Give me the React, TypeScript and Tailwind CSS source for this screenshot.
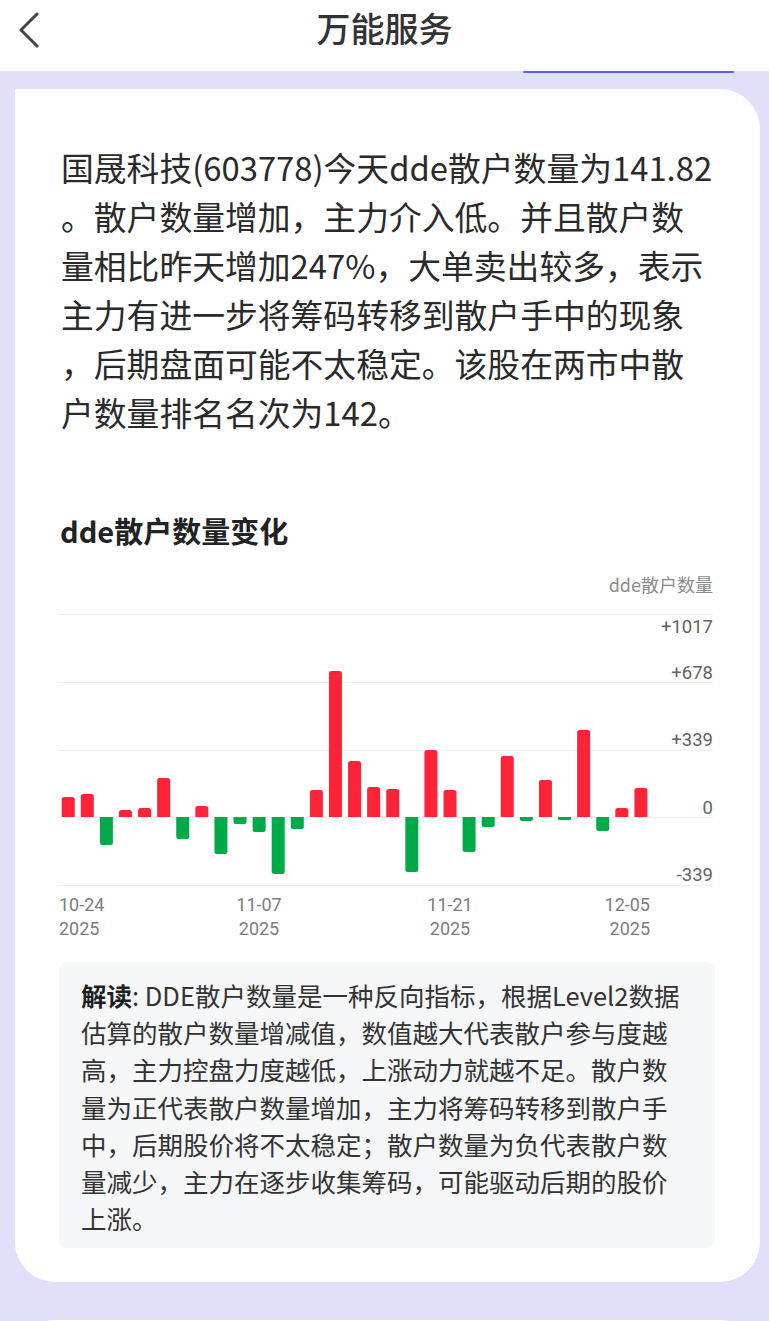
import React from "react";

const CJK = { fontFamily: '"Noto Sans CJK SC", "Noto Sans", sans-serif' };

// bar heights in px (positive = up from the zero line)
const BARS = [
  20, 23, -28, 7, 9, 39, -22, 11, -37, -7, -15, -57, -12, 27, 146, 56, 30, 28,
  -55, 67, 27, -35, -10, 61, -4, 37, -3, 87, -14, 9, 29,
];

const ZERO = 217;
const BAR_W = 13;

function barPath(x: number, h: number) {
  const r = Math.min(2.5, Math.abs(h) / 2);
  const w = BAR_W;
  if (h >= 0) {
    const y0 = ZERO - h;
    return `M${x},${ZERO} V${y0 + r} Q${x},${y0} ${x + r},${y0} H${x + w - r} Q${x + w},${y0} ${x + w},${y0 + r} V${ZERO} Z`;
  }
  const y1 = ZERO - h;
  return `M${x},${ZERO} V${y1 - r} Q${x},${y1} ${x + r},${y1} H${x + w - r} Q${x + w},${y1} ${x + w},${y1 - r} V${ZERO} Z`;
}

function BackIcon() {
  return (
    <svg width={24} height={36} viewBox="0 0 24 36" fill="none">
      <polyline
        points="19,2 3,18 19,34"
        stroke="#444"
        strokeWidth={3}
        strokeLinecap="round"
        strokeLinejoin="round"
      />
    </svg>
  );
}

function DdeChart() {
  const grid = [14, 82, 150, 217, 285];
  const yLabels: [string, number][] = [
    ["+1017", 27],
    ["+678", 73],
    ["+339", 140],
    ["0", 208],
    ["-339", 275],
  ];
  const xLabels: [string, number, "start" | "middle" | "end"][] = [
    ["10-24", 0, "start"],
    ["11-07", 200, "middle"],
    ["11-21", 391, "middle"],
    ["12-05", 591, "end"],
  ];
  return (
    <svg
      width={654}
      height={345}
      viewBox="0 0 654 345"
      className="block"
      style={{ fontFamily: 'Roboto, "Noto Sans", sans-serif' }}
    >
      {grid.map((y) => (
        <line key={y} x1={0} x2={654} y1={y + 0.5} y2={y + 0.5} stroke="#f0f0f2" strokeWidth={1} />
      ))}
      {BARS.map((h, i) => (
        <path key={i} d={barPath(2.7 + i * 19.09, h)} fill={h >= 0 ? "#fe2438" : "#00aa48"} />
      ))}
      {yLabels.map(([t, y]) => (
        <text key={t} x={654} y={y} textAnchor="end" dominantBaseline="central" fontSize={18.5} fill="#636363">
          {t}
        </text>
      ))}
      {xLabels.map(([t, x, a]) => (
        <g key={t} fill="#7c7c7c" fontSize={18}>
          <text x={x} y={304} textAnchor={a} dominantBaseline="central">
            {t}
          </text>
          <text x={x} y={328} textAnchor={a} dominantBaseline="central">
            2025
          </text>
        </g>
      ))}
    </svg>
  );
}

const SUMMARY = [
  "国晟科技(603778)今天dde散户数量为141.82",
  "。散户数量增加，主力介入低。并且散户数",
  "量相比昨天增加247%，大单卖出较多，表示",
  "主力有进一步将筹码转移到散户手中的现象",
  "，后期盘面可能不太稳定。该股在两市中散",
  "户数量排名名次为142。",
];

const NOTE = [
  "估算的散户数量增减值，数值越大代表散户参与度越",
  "高，主力控盘力度越低，上涨动力就越不足。散户数",
  "量为正代表散户数量增加，主力将筹码转移到散户手",
  "中，后期股价将不太稳定；散户数量为负代表散户数",
  "量减少，主力在逐步收集筹码，可能驱动后期的股价",
  "上涨。",
];

export default function App() {
  return (
    <div className="w-[769px] h-[1321px] overflow-hidden bg-[#e1e0fb]" style={CJK}>
      {/* Header */}
      <header className="relative h-[71px] bg-white flex items-center justify-center">
        <div className="absolute left-[18px] top-[12px]">
          <BackIcon />
        </div>
        <h1 className="text-[34px] leading-none font-medium text-[#333] -mt-[16px]">万能服务</h1>
      </header>

      {/* tab underline peeking below the header */}
      <div className="h-[18px] relative">
        <div className="absolute left-[523px] top-0 w-[211px] h-[2px] rounded-full bg-[#5d5cf2]" />
      </div>

      {/* Card */}
      <section className="ml-[15px] w-[745px] bg-white rounded-tr-[40px] rounded-b-[40px] px-[44px] pt-[53px] pb-[34px]">
        <div className="pl-[2px] text-[32.8px] leading-[49px] text-[#2a2a2a]">
          {SUMMARY.map((l) => (
            <div key={l} className="whitespace-nowrap">
              {l}
            </div>
          ))}
        </div>

        <h2 className="mt-[74px] pl-[1px] text-[29px] leading-[40px] font-bold text-[#222]">dde散户数量变化</h2>

        <div className="mt-[22px] w-[654px] text-right text-[18px] leading-[24px] text-[#8a8a8a]">dde散户数量</div>
        <div className="mt-[4px]">
          <DdeChart />
        </div>

        <div className="mt-[17px] w-[656px] rounded-lg bg-[#f6f7f9] pl-[22px] pt-[14px] pb-[12px] text-[25.5px] leading-[37.2px] text-[#333]">
          <div className="whitespace-nowrap">
            <span className="font-bold text-[#1f1f1f]">解读</span>: DDE散户数量是一种反向指标，根据Level2数据
          </div>
          {NOTE.map((l) => (
            <div key={l} className="whitespace-nowrap">
              {l}
            </div>
          ))}
        </div>
      </section>

      {/* next card peeking at the bottom */}
      <div className="mt-[38px] ml-[15px] w-[745px] h-[200px] bg-white rounded-t-[40px]" />
    </div>
  );
}
